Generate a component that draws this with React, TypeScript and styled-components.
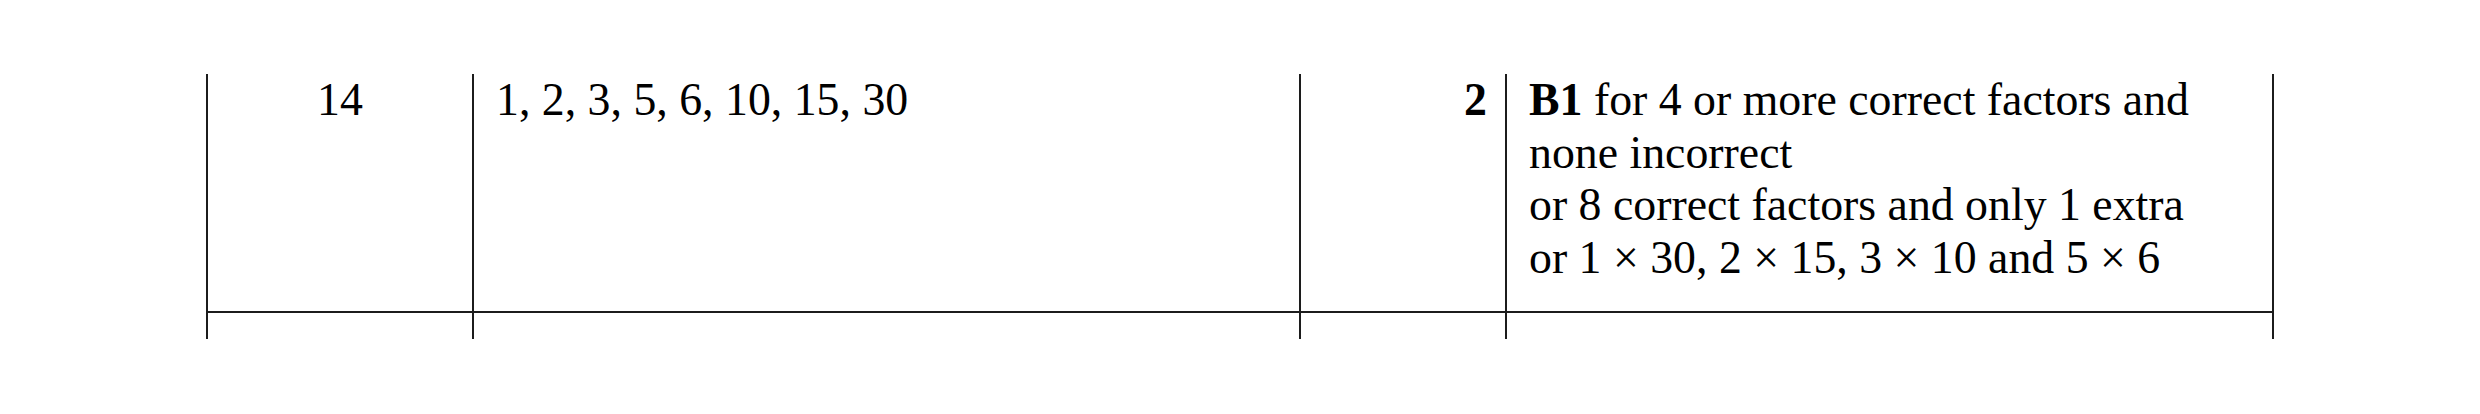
import React from "react";
import styled, { createGlobalStyle } from "styled-components";

const GlobalStyle = createGlobalStyle`
    html, body {
        margin: 0;
        padding: 0;
        background: #ffffff;
    }
`

const Page = styled.div`
    width: 2480px;
    height: 414px;
    padding: 74px 0 0 206px;
    box-sizing: border-box;
    font-family: "Liberation Serif", "Times New Roman", serif;
    font-size: 45.8px;
    line-height: 52.5px;
    color: #000000;
`

const MarkTable = styled.div`
    display: grid;
    grid-template-columns: 266px 827px 206px 769px;
    width: fit-content;
`

const Cell = styled.div<{ $align?: "left" | "center" | "right"; $last?: boolean; $rule?: boolean; $pad?: number }>`
    box-sizing: border-box;
    border-left: 2px solid #1c1c1c;
    border-right: ${(p) => (p.$last ? "2px solid #1c1c1c" : "none")};
    border-bottom: ${(p) => (p.$rule ? "2px solid #1c1c1c" : "none")};
    text-align: ${(p) => p.$align || "left"};
    padding: 0 ${(p) => p.$pad ?? 20}px 27px;
    min-height: 26px;
`

const Bold = styled.b`
    font-weight: 700;
`

const Line = styled.div`
    white-space: nowrap;
`

const EmptyCell = styled(Cell)`
    height: 26px;
    padding: 0;
`

const App = () => {
    return (
        <Page>
            <GlobalStyle />
            <MarkTable>
                <Cell $align="center" $rule>14</Cell>
                <Cell $rule $pad={22}>1, 2, 3, 5, 6, 10, 15, 30</Cell>
                <Cell $align="right" $rule $pad={18}><Bold>2</Bold></Cell>
                <Cell $rule $last $pad={22}>
                    <Line><Bold>B1</Bold> for 4 or more correct factors and</Line>
                    <Line>none incorrect</Line>
                    <Line>or 8 correct factors and only 1 extra</Line>
                    <Line>or 1 × 30, 2 × 15, 3 × 10 and 5 × 6</Line>
                </Cell>

                <EmptyCell />
                <EmptyCell />
                <EmptyCell />
                <EmptyCell $last />
            </MarkTable>
        </Page>
    )
};

export default App;
